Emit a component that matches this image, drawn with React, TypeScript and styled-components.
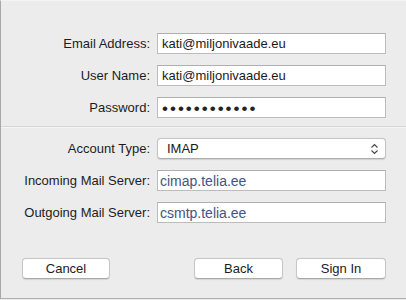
import React from "react";
import styled, { createGlobalStyle } from "styled-components";

const Global = createGlobalStyle`
  html, body { margin: 0; padding: 0; background: #ececec; }
  * { box-sizing: border-box; }
`;

const Window = styled.div`
  width: 406px;
  height: 299px;
  background: #ececec;
  border-left: 1px solid #a8a8a8;
  border-bottom: 1px solid #b0b0b0;
  border-top: 1px solid #f4f4f4;
  display: flex;
  flex-direction: column;
  font-family: "Liberation Sans", Arial, sans-serif;
  font-size: 13px;
  color: #1c1c1c;
`;

const Form = styled.div<{ $top: number; $bottom: number }>`
  display: grid;
  grid-template-columns: 149px 229px;
  column-gap: 7px;
  row-gap: 11px;
  padding-top: ${(p) => p.$top}px;
  padding-bottom: ${(p) => p.$bottom}px;
  align-items: center;
`;

const Label = styled.label`
  text-align: right;
  white-space: nowrap;
  line-height: 21px;
`;

const Field = styled.div<{ $muted?: boolean }>`
  height: 21px;
  background: #fff;
  border: 1px solid #bcbcbc;
  border-top-color: #b0b0b0;
  display: flex;
  align-items: center;
  padding-left: ${(p) => (p.$muted ? 2 : 4)}px;
  font-size: ${(p) => (p.$muted ? 14 : 13)}px;
  color: ${(p) => (p.$muted ? "#45557c" : "#1a1a1a")};
  white-space: nowrap;
  overflow: hidden;
`;

const Dots = styled.span`
  font-size: 17px;
  letter-spacing: 2px;
  line-height: 1;
  color: #222;
  padding-top: 1px;
`;

const Divider = styled.div`
  height: 2px;
  border-top: 1px solid #d6d6d6;
  border-bottom: 1px solid #f6f6f6;
`;

const Select = styled.div`
  height: 21px;
  background: #fff;
  border: 1px solid #c4c4c4;
  border-bottom-color: #adadad;
  border-radius: 4px;
  box-shadow: 0 0.5px 1px rgba(0, 0, 0, 0.12);
  display: flex;
  align-items: center;
  justify-content: space-between;
  padding: 0 6px 0 9px;
  color: #1a1a1a;
`;

const Footer = styled.div`
  margin-top: 35px;
  display: flex;
  padding: 0 20px 0 21px;
  gap: 13px;
`;

const Button = styled.button<{ $w: number; $push?: boolean }>`
  width: ${(p) => p.$w}px;
  height: 21px;
  margin-left: ${(p) => (p.$push ? "auto" : "0")};
  background: #fff;
  border: 1px solid #c6c6c6;
  border-bottom-color: #a9a9a9;
  border-radius: 4px;
  box-shadow: 0 0.5px 1px rgba(0, 0, 0, 0.1);
  font-family: "Liberation Sans", Arial, sans-serif;
  font-size: 13px;
  color: #1c1c1c;
  padding: 0;
  line-height: 19px;
`;

const Chevron = () => (
  <svg width="9" height="12" viewBox="0 0 9 12">
    <path d="M1.5 4.5 L4.5 1.5 L7.5 4.5" fill="none" stroke="#444" strokeWidth="1.1" />
    <path d="M1.5 7.5 L4.5 10.5 L7.5 7.5" fill="none" stroke="#444" strokeWidth="1.1" />
  </svg>
);

export default function App() {
  return (
    <>
      <Global />
      <Window>
        <Form $top={32} $bottom={8}>
          <Label>Email Address:</Label>
          <Field>kati@miljonivaade.eu</Field>
          <Label>User Name:</Label>
          <Field>kati@miljonivaade.eu</Field>
          <Label>Password:</Label>
          <Field>
            <Dots>{"\u2022".repeat(12)}</Dots>
          </Field>
        </Form>
        <Divider />
        <Form $top={10} $bottom={0}>
          <Label>Account Type:</Label>
          <Select>
            <span>IMAP</span>
            <Chevron />
          </Select>
          <Label>Incoming Mail Server:</Label>
          <Field $muted>cimap.telia.ee</Field>
          <Label>Outgoing Mail Server:</Label>
          <Field $muted>csmtp.telia.ee</Field>
        </Form>
        <Footer>
          <Button $w={88}>Cancel</Button>
          <Button $w={89} $push>
            Back
          </Button>
          <Button $w={90}>Sign In</Button>
        </Footer>
      </Window>
    </>
  );
}
